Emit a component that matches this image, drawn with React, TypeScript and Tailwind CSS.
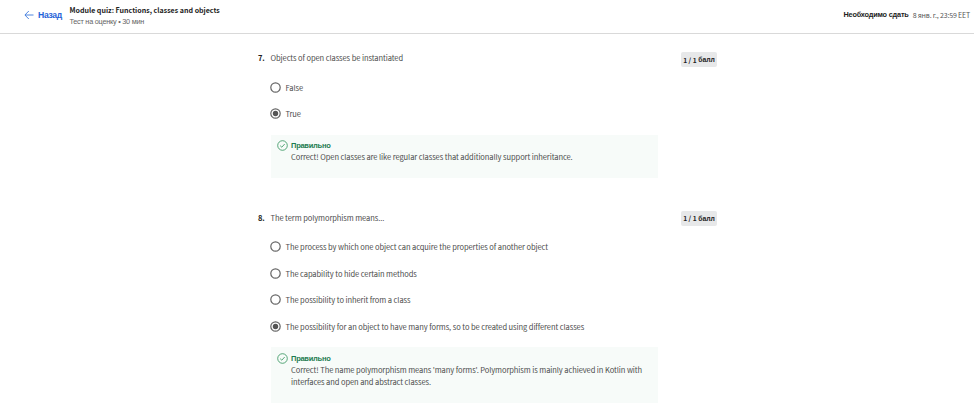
const latin = "font-['Noto_Sans_CJK_SC','Noto_Sans',sans-serif]";
const cyr = "font-['Liberation_Sans',Arial,sans-serif]";

function Radio({ checked }: { checked?: boolean }) {
  return (
    <svg className="size-[11px] shrink-0" viewBox="0 0 11 11" fill="none">
      <circle cx="5.5" cy="5.5" r="4.7" stroke="#666" strokeWidth="1.2" />
      {checked && <circle cx="5.5" cy="5.5" r="2.7" fill="#555" />}
    </svg>
  );
}

function Option({ text, checked }: { text: string; checked?: boolean }) {
  return (
    <div className="flex h-[26.6px] items-center gap-[4.5px]">
      <Radio checked={checked} />
      <span>{text}</span>
    </div>
  );
}

function Badge() {
  return (
    <div className="flex h-[15px] w-9 items-center justify-center rounded-xs bg-[#e7e8e9] text-[6.7px] font-bold tracking-normal whitespace-pre text-[#222]">
      1 / 1 <span className={`${cyr} text-[6.8px]`}>балл</span>
    </div>
  );
}

function Feedback({ lines, className }: { lines: string[]; className: string }) {
  return (
    <div className={`flex w-[387px] gap-[3.5px] bg-[#f7fbf9] pl-1.5 ${className}`}>
      <svg className="size-[11px] shrink-0" viewBox="0 0 11 11" fill="none" stroke="#2d9058" strokeWidth="0.8">
        <circle cx="5.5" cy="5.5" r="4.8" />
        <path d="M3.2 5.7 4.8 7.2 7.7 4" />
      </svg>
      <div>
        <div className={`${cyr} h-[11.5px] text-[7.5px] leading-3 font-bold tracking-[-0.26px] text-[#1d7c50]`}>Правильно</div>
        {lines.map((line) => (
          <div key={line} className="h-[12.3px] leading-3">{line}</div>
        ))}
      </div>
    </div>
  );
}

export default function App() {
  return (
    <div className={`${latin} h-[405px] w-[974px] overflow-hidden bg-white text-[7.52px] tracking-[-0.08px] whitespace-nowrap text-[#4b4b4b]`}>
      <header className="flex h-[34px] items-start border-b border-[#d9d9d9]">
        <div className="flex h-[30px] w-[69.5px] items-center pl-6">
          <svg className="mr-1 size-[10px]" viewBox="0 0 10 10" fill="none" stroke="#3b78dc" strokeWidth="0.9">
            <path d="M9.5 5H1M4.8 1 .9 5l3.9 4" />
          </svg>
          <span className={`${cyr} text-[8.6px] font-bold tracking-[-0.3px] text-[#1f63d8]`}>Назад</span>
        </div>
        <div className="grow pt-1">
          <div className="h-[11px] text-[7.05px] leading-3 font-bold tracking-normal text-[#222]">Module quiz: Functions, classes and objects</div>
          <div className={`${cyr} text-[7.3px] leading-[13px] tracking-[-0.25px] text-[#666]`}>Тест на оценку • 30 мин</div>
        </div>
        <div className="flex h-[31px] items-center gap-1 pr-1">
          <span className={`${cyr} text-[7.3px] font-bold tracking-[-0.18px] text-[#222]`}>Необходимо сдать</span>
          <span className="text-[7px] tracking-[-0.17px] text-[#555]">8 янв. г., 23:59 EET</span>
        </div>
      </header>
      <main className="pl-[257px]">
        <section className="h-[160px] pt-[18px]">
          <div className="flex h-[15px] w-[460px] items-start leading-3">
            <span className="w-[13.5px] pl-px font-bold text-[#222]">7.</span>
            <span className="grow">Objects of open classes be instantiated</span>
            <Badge />
          </div>
          <div className="pt-[7px] pl-[13px]">
            <Option text="False" />
            <Option text="True" checked />
          </div>
          <div className="pt-[7.5px] pl-[13.5px]">
            <Feedback
              className="h-[43px] pt-[5px]"
              lines={["Correct! Open classes are like regular classes that additionally support inheritance."]}
            />
          </div>
        </section>
        <section className="pt-[17px]">
          <div className="flex h-[15px] w-[460px] items-start leading-[13px]">
            <span className="w-[13.5px] pl-px font-bold text-[#222]">8.</span>
            <span className="grow">The term polymorphism means...</span>
            <Badge />
          </div>
          <div className="pt-[7.3px] pl-[13px]">
            <Option text="The process by which one object can acquire the properties of another object" />
            <Option text="The capability to hide certain methods" />
            <Option text="The possibility to inherit from a class" />
            <Option text="The possibility for an object to have many forms, so to be created using different classes" checked />
          </div>
          <div className="pt-[7.2px] pl-[13.5px]">
            <Feedback
              className="h-[56px] pt-[5.8px]"
              lines={[
                "Correct! The name polymorphism means 'many forms'. Polymorphism is mainly achieved in Kotlin with",
                "interfaces and open and abstract classes.",
              ]}
            />
          </div>
        </section>
      </main>
    </div>
  );
}
